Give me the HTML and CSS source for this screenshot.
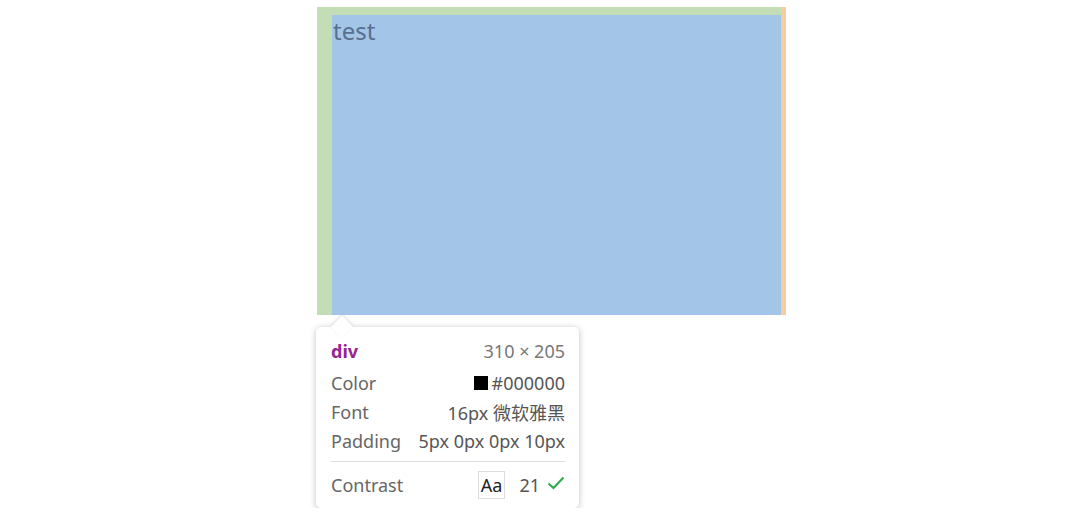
FILE: index.html
```html
<!DOCTYPE html>
<html lang="en">
<head>
    <meta charset="UTF-8">
    <meta name="viewport" content="width=device-width, initial-scale=1.0">
    <title>Inspect</title>
    <link rel="stylesheet" href="styles.css">
</head>
<body>
    <div class="stage">
        <div class="highlight">
            <div class="padding-box">
                <div class="content-box">test</div>
            </div>
            <div class="margin-box"></div>
        </div>

        <div class="tooltip">
            <span class="arrow"></span>
            <div class="row head">
                <span class="tag">div</span>
                <span class="size">310 × 205</span>
            </div>
            <div class="row">
                <span class="label">Color</span>
                <span class="value"><i class="swatch"></i>#000000</span>
            </div>
            <div class="row">
                <span class="label">Font</span>
                <span class="value">16px 微软雅黑</span>
            </div>
            <div class="row">
                <span class="label">Padding</span>
                <span class="value">5px 0px 0px 10px</span>
            </div>
            <div class="divider"></div>
            <div class="row">
                <span class="label">Contrast</span>
                <span class="value">
                    <span class="sample">Aa</span>
                    <span class="ratio">21</span>
                    <svg class="check" width="18" height="14" viewBox="0 0 18 14">
                        <path d="M1.5 7.5 L6.5 12 L16.5 1.5" fill="none" stroke="#2fa84f" stroke-width="2"/>
                    </svg>
                </span>
            </div>
        </div>
    </div>
</body>
</html>
```

FILE: styles.css
```css
* {
    margin: 0;
    padding: 0;
    box-sizing: border-box;
}

body {
    background-color: #fff;
    font-family: "Noto Sans", "Open Sans", "Noto Sans CJK SC", sans-serif;
}

.stage {
    padding: 7px 0 0 317px;
}

/* Highlighted element */
.highlight {
    display: flex;
    height: 308px;
}

.padding-box {
    width: 464px;
    padding: 8px 0 0 15px;
    background-color: #c3deb7;
}

.content-box {
    height: 100%;
    background-color: #a3c5e8;
    color: #57708f;
    font-family: "Noto Sans", "Noto Sans CJK SC", sans-serif;
    font-size: 24px;
    line-height: 32px;
    padding-left: 1px;
}

.margin-box {
    width: 5px;
    background-color: #f9cc9d;
}

/* Tooltip */
.tooltip {
    position: relative;
    width: 263px;
    margin: 12px 0 0 -1px;
    padding: 10px 14px 9px 15px;
    background-color: #fff;
    border-radius: 5px;
    box-shadow: 0 1px 6px rgba(0, 0, 0, 0.25);
    font-size: 18px;
    color: #333;
}

.arrow {
    position: absolute;
    top: -8px;
    left: 18px;
    width: 16px;
    height: 16px;
    background-color: #fff;
    transform: rotate(45deg);
    box-shadow: -1px -1px 3px rgba(0, 0, 0, 0.12);
}

.row {
    position: relative;
    display: flex;
    justify-content: space-between;
    align-items: center;
    height: 29px;
}

.head {
    height: 27px;
    margin-bottom: 4px;
}

.tag {
    color: #962593;
    font-weight: bold;
}

.size {
    color: #777;
}

.label {
    color: #666;
}

.value {
    display: flex;
    align-items: center;
    color: #555;
}

.swatch {
    display: inline-block;
    width: 14px;
    height: 14px;
    background-color: #000;
    margin-right: 4px;
}

.divider {
    height: 1px;
    background-color: #ddd;
    margin: 6px 0 8px;
}

.sample {
    display: inline-block;
    padding: 0 2px;
    line-height: 26px;
    border: 1px solid #ddd;
    color: #222;
    margin-right: 14px;
}

.ratio {
    margin-right: 7px;
}

.check {
    margin-top: -4px;
}
```
